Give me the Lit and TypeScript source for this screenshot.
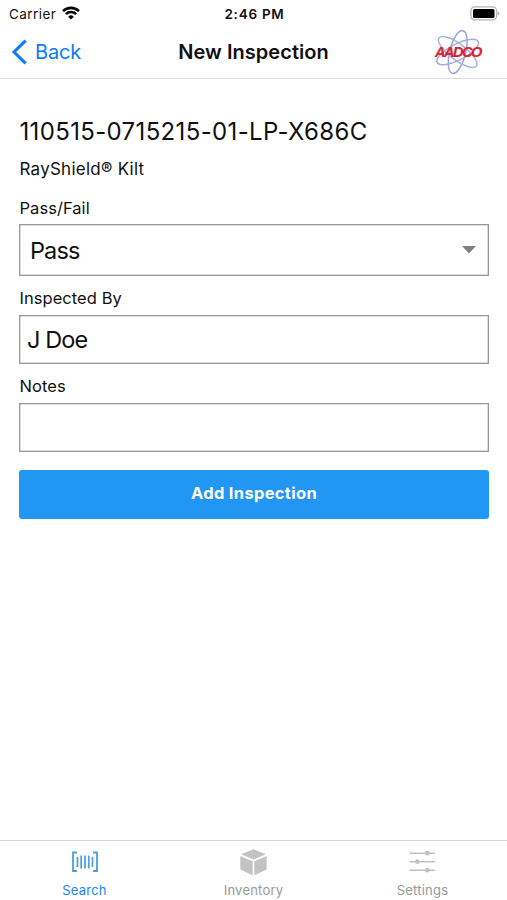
import { LitElement, html, css, svg } from "lit";
import { customElement, property } from "lit/decorators.js";
import { classMap } from "lit/directives/class-map.js";

const base = css`
  :host { display: block; box-sizing: border-box; font-family: Inter, "Liberation Sans", sans-serif; color: #111; }
  *, *::before, *::after { box-sizing: border-box; }
  svg { display: block; }
`;

@customElement("status-bar")
class StatusBar extends LitElement {
  static styles = [base, css`
    .bar { height: 28px; display: grid; grid-template-columns: 1fr auto 1fr; align-items: center; padding: 0 7px 0 9px; font-size: 13.5px; line-height: 28px; }
    .left { display: flex; align-items: center; gap: 6px; letter-spacing: 0.45px; }
    .wifi { margin-top: -2px; }
    .time { font-weight: 600; letter-spacing: 0.75px; }
    .battery { justify-self: end; margin-top: -2px; }
  `];
  render() {
    return html`<div class="bar">
      <div class="left"><span>Carrier</span>
        <svg class="wifi" width="18" height="14" viewBox="0 0 18 14" fill="none" stroke="#050505" stroke-width="2.6">
          <path d="M1 5.1A11.6 11.6 0 0 1 17 5.1"/><path d="M3.9 8.1A7.4 7.4 0 0 1 14.1 8.1"/>
          <path d="M9 13.4L6.2 10.7A4 4 0 0 1 11.8 10.7Z" fill="#050505" stroke="none"/>
        </svg></div>
      <div class="time">2:46 PM</div>
      <svg class="battery" width="30" height="15" viewBox="0 0 30 15">
        <rect x="0.9" y="0.9" width="25.6" height="13" rx="3.8" fill="#fff" stroke="#b5b5b5" stroke-width="1.3"/>
        <rect x="3" y="3" width="21.5" height="9" rx="1.6" fill="#000"/>
        <path d="M27.7 5.2Q29.4 6 29.4 7.4T27.7 9.6Z" fill="#aaa"/>
      </svg>
    </div>`;
  }
}

@customElement("nav-header")
class NavHeader extends LitElement {
  static styles = [base, css`
    .bar { height: 51px; border-bottom: 1px solid #dcdcdc; display: grid; grid-template-columns: 1fr auto 1fr; align-items: center; padding: 0 11px; }
    .back { display: flex; align-items: center; gap: 7px; color: #0d7bf5; font-size: 20px; line-height: 24px; letter-spacing: -0.15px; }
    .title { font-size: 20px; font-weight: 600; line-height: 24px; letter-spacing: 0.05px; }
    .back, .title { margin-top: -2px; }
    .logo { justify-self: end; margin-right: 13px; overflow: visible; }
    .name { font: italic bold 14.5px "Liberation Sans", sans-serif; letter-spacing: -1.5px; fill: #d8232f; stroke: #d8232f; stroke-width: 0.2px; }
  `];
  render() {
    return html`<div class="bar">
      <div class="back">
        <svg width="17" height="26" viewBox="0 0 17 26" fill="none" stroke="currentColor" stroke-width="3"><path d="M14.7 1.6L3 13L14.7 24.4"/></svg>
        <span>Back</span></div>
      <div class="title">New Inspection</div>
      <svg class="logo" width="50" height="46" viewBox="0 0 50 46">
        <g fill="none" stroke-width="1.5">
          <ellipse cx="24.7" cy="22" rx="8" ry="22" transform="rotate(14 24.7 22)" stroke="#9ba4d8"/>
          <ellipse cx="24.7" cy="22" rx="23.3" ry="8" transform="rotate(37 24.7 22)" stroke="#a4b6dc"/>
          <ellipse cx="24.7" cy="22" rx="23" ry="8" transform="rotate(-27 24.7 22)" stroke="#a9a9dc"/>
        </g>
        <text class="name" x="2" y="27">AADCO</text>
      </svg>
    </div>`;
  }
}

@customElement("form-field")
class FormField extends LitElement {
  @property() label = "";
  @property() value = "";
  @property({ type: Boolean }) select = false;
  static styles = [base, css`
    .label { font-size: 16.5px; line-height: 20px; height: 27px; padding-left: 0.5px; letter-spacing: 0.05px; }
    .label.raised { height: 26px; }
    .box { height: 49px; border: 1.5px solid #999; box-shadow: inset 0 0 0 0.5px #bbb; display: flex; align-items: center; justify-content: space-between; padding: 0 12px 0 7px; font-size: 23.5px; letter-spacing: -0.9px; }
    .box.select { height: 52px; padding-left: 10px; }
  `];
  render() {
    return html`<div class=${classMap({ label: true, raised: this.select })}>${this.label}</div>
      <div class=${classMap({ box: true, select: this.select })}><span>${this.value}</span>
        ${this.select ? html`<svg width="14" height="8" viewBox="0 0 14 8"><path d="M0 0H14L7 7.5Z" fill="#808080"/></svg>` : ""}
      </div>`;
  }
}

const icons = {
  search: svg`<g fill="none" stroke="#4b9fdb"><path stroke-width="1.8" d="M6 1.5H2V20H6M22 1.5H26V20H22"/><path stroke-width="1.7" d="M6.5 6V16M10.2 4.5V17.5M14 4.5V17.5M17.8 4.5V17.5M21.5 6V16"/></g>`,
  inventory: svg`<g fill="#c3c3c3"><path d="M13.5-1.7L25.9 3.2L13.5 8.6L1.1 3.2Z"/><path d="M.3 5L12.7 10.2V24.2L.3 18.6Z"/><path d="M26.7 5L14.3 10.2V24.2L26.7 18.6Z"/></g>`,
  settings: svg`<g stroke="#c2c2c2" stroke-width="1.6" fill="#c2c2c2"><path d="M.5 2.2H26M.5 10.7H26M.5 19.2H26"/><g stroke="none"><circle cx="18.3" cy="2.2" r="2.4"/><circle cx="8.3" cy="10.7" r="2.4"/><circle cx="18.3" cy="19.2" r="2.4"/></g></g>`,
};

@customElement("tab-bar")
class TabBar extends LitElement {
  static styles = [base, css`
    .tabs { height: 60px; border-top: 1px solid #d8d8d8; display: grid; grid-template-columns: repeat(3, 1fr); }
    .tab { display: flex; flex-direction: column; align-items: center; padding-top: 10px; gap: 9px; font-size: 13px; line-height: 16px; color: #999; letter-spacing: 0.22px; }
    .active { color: #2386f0; }
    svg { overflow: visible; }
  `];
  render() {
    const tab = (name: string, icon: unknown, active = false) => html`<div class=${classMap({ tab: true, active })}>
      <svg width="28" height="22" viewBox="0 0 28 22">${icon}</svg><span>${name}</span></div>`;
    return html`<div class="tabs">${tab("Search", icons.search, true)}${tab("Inventory", icons.inventory)}${tab("Settings", icons.settings)}</div>`;
  }
}

@customElement("app-root")
class AppRoot extends LitElement {
  static styles = [base, css`
    :host { height: 900px; display: flex; flex-direction: column; background: #fff; }
    main { flex: 1; padding: 38px 18px 0 19px; display: flex; flex-direction: column; }
    .code { font-size: 24px; line-height: 30px; letter-spacing: 0.35px; padding-left: 0.5px; }
    .product { font-size: 17px; line-height: 22px; margin: 11px 0 18px; padding-left: 0.5px; letter-spacing: 0.25px; }
    .fields { display: flex; flex-direction: column; gap: 12px; }
    .add { margin-top: 18px; height: 49px; border: 0; border-radius: 3px; background: #2196f3; color: #fff; font: 700 16.5px/20px Inter, sans-serif; letter-spacing: 0.32px; padding: 0 0 4px; }
  `];
  render() {
    return html`<status-bar></status-bar><nav-header></nav-header>
      <main>
        <div class="code">110515-0715215-01-LP-X686C</div>
        <div class="product">RayShield® Kilt</div>
        <div class="fields">
          <form-field label="Pass/Fail" value="Pass" select></form-field>
          <form-field label="Inspected By" value="J Doe"></form-field>
          <form-field label="Notes"></form-field>
        </div>
        <button class="add">Add Inspection</button>
      </main>
      <tab-bar></tab-bar>`;
  }
}
